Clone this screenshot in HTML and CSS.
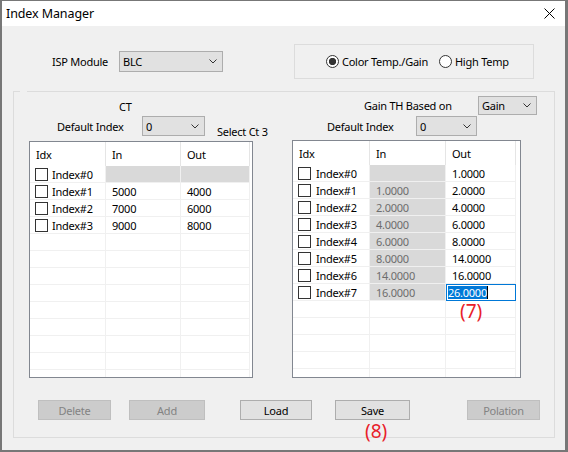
FILE: index.html
```html
<!DOCTYPE html>
<html>
<head>
<meta charset="utf-8">
<link rel="stylesheet" href="styles.css">
</head>
<body>
<div class="window">
  <div class="titlebar">
    <span class="title">Index Manager</span>
    <svg class="close" width="11" height="11" viewBox="0 0 11 11"><path d="M0.5 0.5 L10.5 10.5 M10.5 0.5 L0.5 10.5" stroke="#000" stroke-width="1"/></svg>
  </div>

  <div class="toprow">
    <span class="isp-label">ISP Module</span>
    <div class="select isp"><span>BLC</span><svg class="chev" width="8" height="5" viewBox="0 0 8 5"><path d="M0.5 0.5 L4 4 L7.5 0.5" fill="none" stroke="#333" stroke-width="1"/></svg></div>
    <div class="radiobox">
      <span class="radio checked"></span><span class="rtext">Color Temp./Gain</span>
      <span class="radio second"></span><span class="rtext">High Temp</span>
    </div>
  </div>

  <div class="group">
    <div class="panels">
      <div class="panel left">
        <div class="ct">CT</div>
        <div class="defrow">
          <span class="deflabel">Default Index</span>
          <div class="select sm"><span>0</span><svg class="chev" width="8" height="5" viewBox="0 0 8 5"><path d="M0.5 0.5 L4 4 L7.5 0.5" fill="none" stroke="#333" stroke-width="1"/></svg></div>
          <span class="selectct">Select Ct 3</span>
        </div>
        <div class="table tl">
          <div class="thead"><div class="th c1">Idx</div><div class="th c2">In</div><div class="th c3">Out</div></div>
          <div class="row"><div class="cell c1 idx"><span class="cb"></span>Index#0</div><div class="cell c2 gray"></div><div class="cell c3 gray"></div></div>
          <div class="row"><div class="cell c1 idx"><span class="cb"></span>Index#1</div><div class="cell c2">5000</div><div class="cell c3">4000</div></div>
          <div class="row"><div class="cell c1 idx"><span class="cb"></span>Index#2</div><div class="cell c2">7000</div><div class="cell c3">6000</div></div>
          <div class="row"><div class="cell c1 idx"><span class="cb"></span>Index#3</div><div class="cell c2">9000</div><div class="cell c3">8000</div></div>
          <div class="row"><div class="cell c1"></div><div class="cell c2"></div><div class="cell c3"></div></div>
          <div class="row"><div class="cell c1"></div><div class="cell c2"></div><div class="cell c3"></div></div>
          <div class="row"><div class="cell c1"></div><div class="cell c2"></div><div class="cell c3"></div></div>
          <div class="row"><div class="cell c1"></div><div class="cell c2"></div><div class="cell c3"></div></div>
          <div class="row"><div class="cell c1"></div><div class="cell c2"></div><div class="cell c3"></div></div>
          <div class="row"><div class="cell c1"></div><div class="cell c2"></div><div class="cell c3"></div></div>
          <div class="row"><div class="cell c1"></div><div class="cell c2"></div><div class="cell c3"></div></div>
          <div class="row"><div class="cell c1"></div><div class="cell c2"></div><div class="cell c3"></div></div>
          <div class="row"><div class="cell c1"></div><div class="cell c2"></div><div class="cell c3"></div></div>
        </div>
      </div>

      <div class="panel right">
        <div class="gainrow">
          <span class="gainlabel">Gain TH Based on</span>
          <div class="select gain"><span>Gain</span><svg class="chev" width="8" height="5" viewBox="0 0 8 5"><path d="M0.5 0.5 L4 4 L7.5 0.5" fill="none" stroke="#333" stroke-width="1"/></svg></div>
        </div>
        <div class="defrow r">
          <span class="deflabel r">Default Index</span>
          <div class="select r0"><span>0</span><svg class="chev" width="8" height="5" viewBox="0 0 8 5"><path d="M0.5 0.5 L4 4 L7.5 0.5" fill="none" stroke="#333" stroke-width="1"/></svg></div>
        </div>
        <div class="table tr">
          <div class="thead"><div class="th d1">Idx</div><div class="th d2">In</div><div class="th d3">Out</div></div>
          <div class="row"><div class="cell d1 idx"><span class="cb"></span>Index#0</div><div class="cell d2 gray"></div><div class="cell d3">1.0000</div></div>
          <div class="row"><div class="cell d1 idx"><span class="cb"></span>Index#1</div><div class="cell d2 gray ro">1.0000</div><div class="cell d3">2.0000</div></div>
          <div class="row"><div class="cell d1 idx"><span class="cb"></span>Index#2</div><div class="cell d2 gray ro">2.0000</div><div class="cell d3">4.0000</div></div>
          <div class="row"><div class="cell d1 idx"><span class="cb"></span>Index#3</div><div class="cell d2 gray ro">4.0000</div><div class="cell d3">6.0000</div></div>
          <div class="row"><div class="cell d1 idx"><span class="cb"></span>Index#4</div><div class="cell d2 gray ro">6.0000</div><div class="cell d3">8.0000</div></div>
          <div class="row"><div class="cell d1 idx"><span class="cb"></span>Index#5</div><div class="cell d2 gray ro">8.0000</div><div class="cell d3">14.0000</div></div>
          <div class="row"><div class="cell d1 idx"><span class="cb"></span>Index#6</div><div class="cell d2 gray ro">14.0000</div><div class="cell d3">16.0000</div></div>
          <div class="row"><div class="cell d1 idx"><span class="cb"></span>Index#7</div><div class="cell d2 gray ro">16.0000</div><div class="cell d3 edit"><span class="sel">26.0000</span><span class="caret"></span></div></div>
          <div class="row"><div class="cell d1"></div><div class="cell d2"></div><div class="cell d3"></div></div>
          <div class="row"><div class="cell d1"></div><div class="cell d2"></div><div class="cell d3"></div></div>
          <div class="row"><div class="cell d1"></div><div class="cell d2"></div><div class="cell d3"></div></div>
          <div class="row"><div class="cell d1"></div><div class="cell d2"></div><div class="cell d3"></div></div>
          <div class="row"><div class="cell d1"></div><div class="cell d2"></div><div class="cell d3"></div></div>
        </div>
      </div>
    </div>

    <div class="buttons">
      <div class="btn disabled b-del">Delete</div>
      <div class="btn disabled b-add">Add</div>
      <div class="btn b-load">Load</div>
      <div class="btn b-save">Save</div>
      <div class="btn disabled b-pol">Polation</div>
    </div>
  </div>

  <span class="note n7">(7)</span>
  <span class="note n8">(8)</span>
</div>
</body>
</html>
```
FILE: styles.css
```css
* { box-sizing: border-box; }
body {
  margin: 0;
  font-family: "Noto Sans", "DejaVu Sans", sans-serif;
  font-size: 11px;
  letter-spacing: -0.25px;
  color: #000;
}
.window {
  position: relative;
  width: 568px;
  height: 452px;
  background: #f0f0f0;
  border: 1px solid #777;
  border-left-width: 2px;
  border-right-width: 3px;
  border-bottom-width: 2px;
  overflow: hidden;
}
.titlebar {
  height: 25px;
  background: #fff;
  display: flex;
  align-items: center;
  justify-content: space-between;
  padding-left: 4px;
  padding-right: 10px;
}
.title { font-size: 12.5px; letter-spacing: -0.1px; }
.close { display: block; }

.toprow {
  display: flex;
  align-items: center;
  height: 35px;
  margin-top: 18px;
  padding-left: 50px;
}
.isp-label { width: 67px; flex: none; }
.select {
  display: flex;
  align-items: center;
  justify-content: space-between;
  background: #e1e1e1;
  border: 1px solid #adadad;
  padding: 0 5px 0 3px;
  flex: none;
}
.chev { display: block; }
.select.isp { width: 104px; height: 21px; }
.radiobox {
  margin-left: 71px;
  width: 240px;
  height: 35px;
  border: 1px solid #dcdcdc;
  display: flex;
  align-items: center;
  padding-left: 31px;
  flex: none;
}
.radio {
  width: 13px;
  height: 13px;
  border: 1px solid #333;
  border-radius: 50%;
  background: #fff;
  margin-right: 3px;
  flex: none;
}
.radio.checked { background: radial-gradient(circle, #333 0 3.4px, #fff 3.9px); }
.radio.second { margin-left: 11px; }

.group {
  position: relative;
  margin-top: 12px;
  margin-left: 11px;
  width: 542px;
  height: 347px;
  border: 1px solid #dcdcdc;
}
.group::before {
  content: "";
  position: absolute;
  top: -1px;
  left: 6px;
  width: 7px;
  height: 1px;
  background: #f0f0f0;
}
.panels { display: flex; }
.panel { flex: none; }
.panel.left { margin-left: 15px; width: 224px; }
.panel.right { margin-left: 39px; width: 245px; }

.ct { height: 24px; padding: 7px 0 0 90px; line-height: 16px; }
.defrow {
  display: flex;
  align-items: center;
  height: 20px;
  padding-left: 28px;
}
.deflabel { width: 85px; flex: none; white-space: nowrap; }
.select.sm { width: 63px; height: 20px; }
.selectct {
  align-self: flex-start;
  margin-left: 12px;
  padding-top: 8px;
  line-height: 16px;
  white-space: nowrap;
  flex: none;
}

.gainrow {
  display: flex;
  align-items: center;
  height: 19px;
  margin-top: 4px;
  padding-left: 72px;
}
.gainlabel { width: 114px; flex: none; white-space: nowrap; }
.select.gain { width: 59px; height: 19px; }
.defrow.r { margin-top: 1px; padding-left: 35px; }
.deflabel.r { width: 89px; }
.select.r0 { width: 61px; height: 20px; }

.table {
  background: #fff;
  border: 1px solid #828790;
  overflow: hidden;
}
.table.tl { margin-top: 5px; height: 237px; width: 224px; }
.table.tr { margin-top: 4px; height: 238px; width: 229px; }
.thead { display: flex; height: 24px; }
.th {
  display: flex;
  align-items: center;
  padding-left: 6px;
  border-right: 1px solid #e5e5e5;
  flex: none;
}
.row { display: flex; height: 17px; }
.cell {
  display: flex;
  align-items: center;
  padding-left: 6px;
  border-right: 1px solid #f0f0f0;
  border-bottom: 1px solid #f0f0f0;
  white-space: nowrap;
  flex: none;
}
.c1 { width: 76px; }
.c2 { width: 75px; }
.c3 { width: 69px; }
.d1 { width: 77px; }
.d2 { width: 76px; }
.d3 { width: 70px; }
.cell.idx { padding-left: 5px; }
.cb {
  width: 13px;
  height: 13px;
  border: 1px solid #333;
  background: #fff;
  margin-right: 4px;
  flex: none;
}
.tr .cb { margin-right: 5px; }
.gray { background: #d9d9d9; }
.ro { color: #6d6d6d; }
.cell.edit {
  border: 1px solid #0078d7;
  padding-left: 1px;
}
.sel { background: #0078d7; color: #fff; line-height: 13px; }
.caret { width: 1px; height: 13px; background: #000; }

.buttons { display: flex; margin-top: 22px; }
.btn {
  height: 20px;
  display: flex;
  align-items: center;
  justify-content: center;
  background: #e1e1e1;
  border: 1px solid #adadad;
  flex: none;
}
.btn.disabled { background: #cccccc; border-color: #bfbfbf; color: #838383; }
.b-del { margin-left: 24px; width: 73px; }
.b-add { margin-left: 18px; width: 76px; }
.b-load { margin-left: 35px; width: 72px; }
.b-save { margin-left: 23px; width: 75px; }
.b-pol { margin-left: 57px; width: 73px; }

.note {
  position: absolute;
  color: #e8202a;
  font-size: 19px;
  line-height: 19px;
  letter-spacing: 0;
}
.n7 { left: 458px; top: 301px; }
.n8 { left: 363px; top: 421px; }
```
